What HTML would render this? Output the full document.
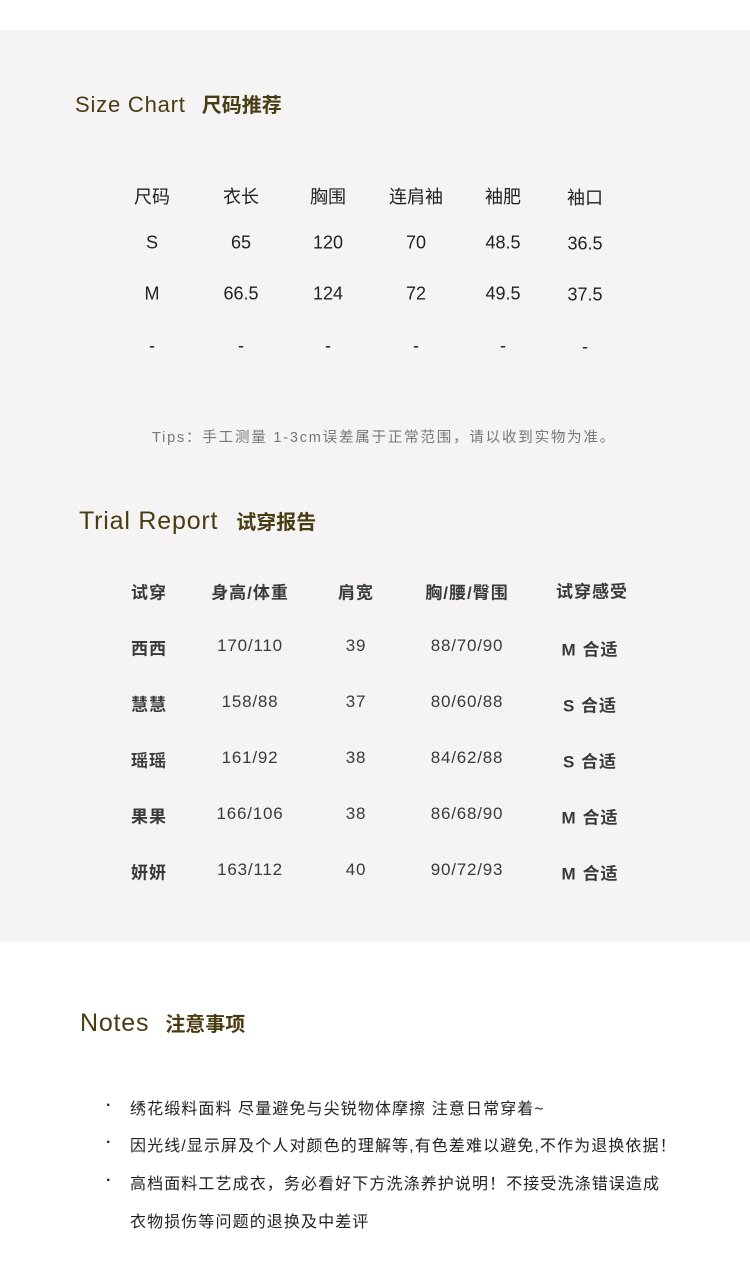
<!DOCTYPE html>
<html><head><meta charset="utf-8"><style>
body{margin:0;width:750px;height:1275px;background:#fff;position:relative;overflow:hidden;font-family:"Liberation Sans","Noto Sans CJK SC",sans-serif;}
.bg{position:absolute;left:0;top:30px;width:750px;height:911px;background:#f6f3f4;}
.t{position:absolute;white-space:nowrap;}
.c{position:absolute;transform:translate(-50%,-50%);white-space:nowrap;}
.h{color:#4a3c12;font-size:22px;letter-spacing:0.8px;}
.h span{font-size:20px;margin-left:16px;letter-spacing:0;font-family:"Noto Sans CJK SC",sans-serif;font-weight:600;}
.s{font-size:18px;color:#222;}
.r{font-size:17px;color:#3a3a3a;letter-spacing:0.8px;}
.rb{font-size:17px;color:#3a3a3a;font-weight:bold;letter-spacing:1px;}
.n{font-size:16px;color:#222;letter-spacing:1.1px;}
</style></head><body>
<div class="bg"></div>
<div class="t h" style="left:75px;top:89px;">Size Chart<span>尺码推荐</span></div>
<div class="t h" style="left:79px;top:506px;font-size:25px;">Trial Report<span style="margin-left:18px">试穿报告</span></div>
<div class="t h" style="left:80px;top:1008px;font-size:25px;">Notes<span style="margin-left:16px">注意事项</span></div>

<div class="c s" style="left:152px;top:196px">尺码</div><div class="c s" style="left:241px;top:196px">衣长</div><div class="c s" style="left:328px;top:196px">胸围</div><div class="c s" style="left:416px;top:196px">连肩袖</div><div class="c s" style="left:503px;top:196px">袖肥</div><div class="c s" style="left:585px;top:197px">袖口</div>
<div class="c s" style="left:152px;top:243px">S</div><div class="c s" style="left:241px;top:243px">65</div><div class="c s" style="left:328px;top:243px">120</div><div class="c s" style="left:416px;top:243px">70</div><div class="c s" style="left:503px;top:243px">48.5</div><div class="c s" style="left:585px;top:244px">36.5</div>
<div class="c s" style="left:152px;top:294px">M</div><div class="c s" style="left:241px;top:294px">66.5</div><div class="c s" style="left:328px;top:294px">124</div><div class="c s" style="left:416px;top:294px">72</div><div class="c s" style="left:503px;top:294px">49.5</div><div class="c s" style="left:585px;top:295px">37.5</div>
<div class="c s" style="left:152px;top:346px">-</div><div class="c s" style="left:241px;top:346px">-</div><div class="c s" style="left:328px;top:346px">-</div><div class="c s" style="left:416px;top:346px">-</div><div class="c s" style="left:503px;top:346px">-</div><div class="c s" style="left:585px;top:347px">-</div>

<div class="t" style="left:152px;top:426px;font-size:14.5px;color:#777;letter-spacing:1.8px;">Tips：手工测量 1-3cm误差属于正常范围，请以收到实物为准。</div>

<div class="c rb" style="left:149px;top:591px">试穿</div><div class="c rb" style="left:250px;top:591px">身高/体重</div><div class="c rb" style="left:356px;top:591px">肩宽</div><div class="c rb" style="left:467px;top:591px">胸/腰/臀围</div><div class="c rb" style="left:592px;top:590px">试穿感受</div>

<div class="c rb" style="left:149px;top:647px">西西</div><div class="c r" style="left:250px;top:646px">170/110</div><div class="c r" style="left:356px;top:646px">39</div><div class="c r" style="left:467px;top:646px">88/70/90</div><div class="c rb" style="left:590px;top:648px">M 合适</div>
<div class="c rb" style="left:149px;top:703px">慧慧</div><div class="c r" style="left:250px;top:702px">158/88</div><div class="c r" style="left:356px;top:702px">37</div><div class="c r" style="left:467px;top:702px">80/60/88</div><div class="c rb" style="left:590px;top:704px">S 合适</div>
<div class="c rb" style="left:149px;top:759px">瑶瑶</div><div class="c r" style="left:250px;top:758px">161/92</div><div class="c r" style="left:356px;top:758px">38</div><div class="c r" style="left:467px;top:758px">84/62/88</div><div class="c rb" style="left:590px;top:760px">S 合适</div>
<div class="c rb" style="left:149px;top:815px">果果</div><div class="c r" style="left:250px;top:814px">166/106</div><div class="c r" style="left:356px;top:814px">38</div><div class="c r" style="left:467px;top:814px">86/68/90</div><div class="c rb" style="left:590px;top:816px">M 合适</div>
<div class="c rb" style="left:149px;top:871px">妍妍</div><div class="c r" style="left:250px;top:870px">163/112</div><div class="c r" style="left:356px;top:870px">40</div><div class="c r" style="left:467px;top:870px">90/72/93</div><div class="c rb" style="left:590px;top:872px">M 合适</div>

<div class="t n" style="left:106px;top:1097px;font-weight:bold">·</div><div class="t n" style="left:130px;top:1095px">绣花缎料面料 尽量避免与尖锐物体摩擦 注意日常穿着~</div>
<div class="t n" style="left:106px;top:1134px;font-weight:bold">·</div><div class="t n" style="left:130px;top:1132px">因光线/显示屏及个人对颜色的理解等,有色差难以避免,不作为退换依据！</div>
<div class="t n" style="left:106px;top:1172px;font-weight:bold">·</div><div class="t n" style="left:130px;top:1170px">高档面料工艺成衣，务必看好下方洗涤养护说明！不接受洗涤错误造成</div>
<div class="t n" style="left:130px;top:1208px">衣物损伤等问题的退换及中差评</div>
</body></html>
